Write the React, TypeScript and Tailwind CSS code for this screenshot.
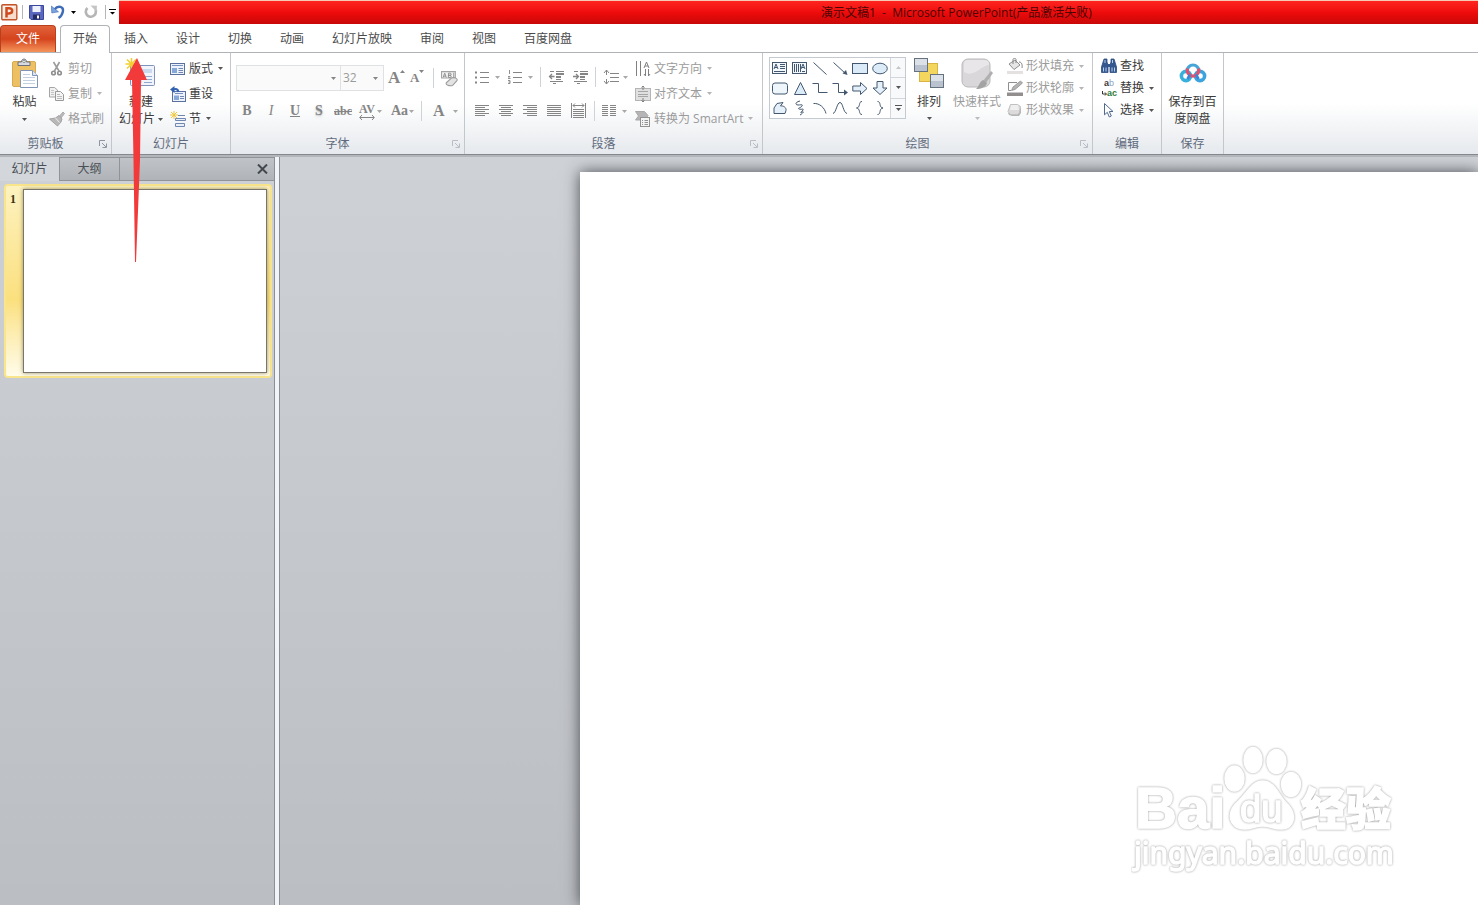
import { ReactNode } from 'react'
import clsx from 'clsx'

const tabs = ['插入', '设计', '切换', '动画', '幻灯片放映', '审阅', '视图', '百度网盘']

function Caret({ className }: { className?: string }) {
  return (
    <svg viewBox="0 0 5 3" className={clsx('h-[3px] w-[5px] shrink-0 fill-current', className)}>
      <path d="M0 0h5L2.5 3z" />
    </svg>
  )
}

function Icon({ children, className = 'size-4' }: { children: ReactNode; className?: string }) {
  return (
    <svg viewBox="0 0 16 16" className={clsx('shrink-0', className)} fill="none" stroke="currentColor">
      {children}
    </svg>
  )
}

function Separator() {
  return <span className="mx-[3px] h-5 w-px shrink-0 bg-[#cfd2d6]" />
}

interface GroupProps {
  label: string
  className: string
  launcher?: boolean
  dim?: boolean
  children: ReactNode
}

function Group({ label, className, launcher, dim, children }: GroupProps) {
  return (
    <section className={clsx('flex shrink-0 flex-col border-r border-[#c3c7cc]', className)}>
      <div className="flex h-[81px] items-start">{children}</div>
      <div className="flex h-5 items-center">
        <span className="flex-1 text-center text-[#5f6b7c]">{label}</span>
        {launcher && (
          <button aria-label={`${label}选项`} className={clsx('ml-1 w-4', dim ? 'text-[#b9bec6]' : 'text-[#8c95a1]')}>
            <svg viewBox="0 0 8 8" className="mx-auto size-2" fill="none" stroke="currentColor">
              <path d="M.5 6V.5H6M3 3l4 4M7.500 3.500v4h-4" />
            </svg>
          </button>
        )}
      </div>
    </section>
  )
}

interface RowButtonProps {
  icon: ReactNode
  label: string
  caret?: boolean
  disabled?: boolean
  className?: string
}

function RowButton({ icon, label, caret, disabled, className = 'h-[25px]' }: RowButtonProps) {
  return (
    <button
      disabled={disabled}
      className={clsx('flex items-center gap-[3px] whitespace-nowrap', disabled ? 'text-[#9b9b9b]' : 'text-[#3b3b3b]', className)}
    >
      {icon}
      <span>{label}</span>
      {caret && <Caret className={clsx('ml-0.5', disabled ? 'text-[#b5b5b5]' : 'text-[#555]')} />}
    </button>
  )
}

function ToolButton({ label, caret, children }: { label: string; caret?: boolean; children: ReactNode }) {
  return (
    <button disabled aria-label={label} className="flex h-6 items-center gap-1 px-1 text-[#858585]">
      {children}
      {caret && <Caret className="text-[#a8a8a8]" />}
    </button>
  )
}

function TitleBar() {
  return (
    <header className="flex h-6 bg-white">
      <div className="flex w-[119px] shrink-0 items-center">
        <svg viewBox="0 0 17 17" className="mx-px size-[17px]">
          <rect x=".8" y=".8" width="15" height="15" rx="1" fill="#f7dccb" stroke="#c4552a" strokeWidth="1.4" />
          <path d="M2 2h13L2 15z" fill="#fff" opacity=".6" />
          <path d="M5.500 13.500V4.200h2.500c4.200 0 4.200 5.200 0 5.200H6.500" fill="none" stroke="#cf4b1d" strokeWidth="2.500" />
        </svg>
        <span className="ml-[3px] h-3.5 w-px bg-[#b5b5b5]" />
        <button aria-label="保存" className="ml-1.5">
          <svg viewBox="0 0 15 15" className="size-[15px]">
            <path d="M.5.5h14v14H2l-1.500-1.500z" fill="#5a68c0" stroke="#3b479b" />
            <path d="M3.500 1h8v6h-8z" fill="#edf1fb" />
            <path d="M4 9.500h7v5H4z" fill="#252d62" />
            <path d="M8 10.500h2v3H8z" fill="#fff" />
          </svg>
        </button>
        <button aria-label="撤消" className="ml-[7px] flex items-center gap-1.5">
          <svg viewBox="0 0 14 14" className="size-3.5">
            <path d="M3.500 4.500C7-.2 13 1.500 11.800 6.700c-.5 2.800-2 4.800-4.300 6.300" fill="none" stroke="#3f6cb8" strokeWidth="2.400" />
            <path d="M.3 1l.5 7 6.700-1.200z" fill="#7ba3dd" stroke="#3f6cb8" strokeWidth=".6" />
          </svg>
          <Caret className="text-black" />
        </button>
        <button disabled aria-label="重复" className="ml-2">
          <svg viewBox="0 0 14 14" className="size-3.5">
            <path d="M3.500 3A5 5 0 1 0 11.800 6V4.500" fill="none" stroke="#b5b5b5" strokeWidth="2.600" />
            <path d="M6.500.5l6.500.3-.5 6z" fill="#c4c4c4" />
          </svg>
        </button>
        <span className="ml-[7px] h-3.5 w-px bg-[#b5b5b5]" />
        <button aria-label="自定义快速访问工具栏" className="ml-[3px]">
          <svg viewBox="0 0 7 6" className="h-1.5 w-[7px]">
            <path d="M0 0h7v1H0zM1 3h5L3.500 5.500z" />
          </svg>
        </button>
      </div>
      <div className="flex flex-1 items-center overflow-hidden border-t border-[#f6c9b4] bg-linear-to-b from-[#ff2420] via-[#ee0b0b] to-[#c80808] pl-[702px]">
        <h1 className="whitespace-pre text-xs text-[#4a0505]">演示文稿1  -  Microsoft PowerPoint(产品激活失败)</h1>
      </div>
    </header>
  )
}

function TabBar() {
  return (
    <nav className="flex h-[29px] items-stretch border-b border-[#b0b3b7] bg-white text-[#4a4a4a]">
      <button className="mt-px w-14 rounded-t-sm border border-b-0 border-[#b8401c] bg-linear-to-b from-[#e0623a] via-[#d5431c] to-[#f4935a] text-white">
        文件
      </button>
      <button className="-mb-px ml-1 mt-px w-[50px] rounded-t-sm border border-b-0 border-[#b0b3b7] bg-white pb-0.5">开始</button>
      {tabs.map((tab) => (
        <button key={tab} className="px-3.5 pt-px">
          {tab}
        </button>
      ))}
    </nav>
  )
}

function ClipboardGroup() {
  return (
    <Group label="剪贴板" className="w-[112px]" launcher>
      <button className="flex w-[49px] flex-col items-center pt-[5px] text-[#3b3b3b]">
        <svg viewBox="0 0 28 32" className="h-8 w-7">
          <rect x="1.500" y="3.500" width="23" height="25" rx="1.500" fill="#edc163" stroke="#d8a94f" />
          <path d="M7 7.500V4h3.500c0-4 5-4 5 0H19v3.500z" fill="#d7dbe1" stroke="#6c7179" />
          <circle cx="13" cy="3.500" r="1.200" fill="#fff" stroke="#6c7179" strokeWidth=".7" />
          <path d="M9.500 12.500h12l5 5v12h-17z" fill="#fff" stroke="#7f94b8" />
          <path d="M21.500 12.500v5h5" fill="#dbe5f3" stroke="#7f94b8" />
          <path d="M12 16.500h7M12 19.500h12M12 22.500h12M12 25.500h12" stroke="#c3d0e4" />
        </svg>
        <span className="mt-1 leading-4">粘贴</span>
        <Caret className="mt-2 text-[#555]" />
      </button>
      <div className="flex flex-col items-start pt-[3px]">
        <RowButton
          disabled
          label="剪切"
          icon={
            <Icon>
              <path d="M4.500 1l5.500 9M10.500 1L5.500 10" stroke="#9b9b9b" strokeWidth="1.600" />
              <circle cx="4.500" cy="12" r="1.800" stroke="#8e8e8e" strokeWidth="1.600" />
              <circle cx="10.500" cy="12" r="1.800" stroke="#8e8e8e" strokeWidth="1.600" />
            </Icon>
          }
        />
        <RowButton
          disabled
          caret
          label="复制"
          icon={
            <Icon>
              <path d="M.5 1.500h5l3 2.500v7h-8z" fill="#f1f1f1" stroke="#a5a5a5" />
              <path d="M2 4.500h3M2 6.500h3M2 8.500h3" stroke="#c4c4c4" />
              <path d="M6.500 5.500h5l3 3v6h-8z" fill="#f5f5f5" stroke="#999" />
              <path d="M8 8.500h3M8 10.500h5M8 12.500h5" stroke="#bbb" />
            </Icon>
          }
        />
        <RowButton
          disabled
          label="格式刷"
          icon={
            <Icon>
              <path d="M10.500 5L14 1l1.500 1.500L12 7z" fill="#bbb" stroke="#aaa" />
              <path d="M.5 8l6-1L10 4.500l3 3.500-1 3-3.500 4z" fill="#b8b8b8" stroke="#a3a3a3" />
              <path d="M6.500 7l4 4.500" stroke="#eee" />
            </Icon>
          }
        />
      </div>
    </Group>
  )
}

function SlidesGroup() {
  return (
    <Group label="幻灯片" className="w-[119px]">
      <button className="flex w-[58px] flex-col items-center pt-[5px] text-[#3b3b3b]">
        <svg viewBox="0 0 32 32" className="h-8 w-8">
          <rect x="5.500" y="7.500" width="24" height="20" rx="1" fill="#f1f5fb" stroke="#8093bb" />
          <path d="M8 11h19v4H8zM8 17h9v8H8z" fill="#cbd9ee" />
          <path d="M19 18.500h8M19 21.500h8M19 24.500h8" stroke="#91a8cf" />
          <path d="M6.500 0v12M.5 6h12M2 1.500l9 9M11 1.500l-9 9" stroke="#f3cf31" strokeWidth="1.600" />
        </svg>
        <span className="mt-1 leading-4">新建</span>
        <span className="flex items-center gap-[3px] leading-[18px]">
          幻灯片
          <Caret className="text-[#555]" />
        </span>
      </button>
      <div className="flex flex-col items-start pt-[3px]">
        <RowButton
          caret
          label="版式"
          icon={
            <Icon>
              <rect x=".5" y="2.500" width="14" height="11" fill="#eef3fb" stroke="#5a719f" />
              <path d="M2 4.500h11" stroke="#7690bf" />
              <path d="M2 7h5v5H2z" fill="#86a8d9" stroke="none" />
              <path d="M8.500 7.500H13M8.500 9.500H13M8.500 11.500H13" stroke="#7087b0" />
            </Icon>
          }
        />
        <RowButton
          label="重设"
          icon={
            <Icon>
              <rect x="2.500" y="5.500" width="13" height="10" fill="#eef3fb" stroke="#5a719f" />
              <path d="M5 7.500h8" stroke="#7690bf" />
              <path d="M4 9.500h5v4.500H4z" fill="#86a8d9" stroke="none" />
              <path d="M10 10.500h4M10 12.500h4" stroke="#7087b0" />
              <path d="M8.500 6C8 3 6 2.500 3 3.500" stroke="#2f62b0" strokeWidth="2" />
              <path d="M4.500 0v7L0 3.500z" fill="#2f62b0" stroke="none" />
            </Icon>
          }
        />
        <RowButton
          caret
          label="节"
          icon={
            <Icon>
              <path d="M4 0v8M0 4h8M1 1l6 6M7 1L1 7" stroke="#eec73b" />
              <path d="M8 4.500h7" stroke="#7087b0" />
              <path d="M5.500 7.500h10v2h-10zM5.500 12.500h9v3h-9z" fill="#e9f0fa" stroke="#7087b0" />
            </Icon>
          }
        />
      </div>
    </Group>
  )
}

function FontGroup() {
  const letter = 'h-6 w-6 text-center text-sm leading-6'
  return (
    <Group label="字体" className="w-[234px]" launcher dim>
      <div className="flex flex-col gap-2 pl-1 pt-3 text-[#858585]">
        <div className="flex h-[26px] items-center">
          <label className="ml-px flex h-[26px] w-[105px] items-center border border-[#dfe1e4] bg-[#fafafa] pr-1">
            <select disabled aria-label="字体" className="min-w-0 flex-1 appearance-none">
              <option></option>
            </select>
            <Caret />
          </label>
          <label className="-ml-px flex h-[26px] w-11 items-center border border-[#dfe1e4] bg-[#fafafa] pl-0.5 pr-[5px]">
            <select disabled aria-label="字号" className="min-w-0 flex-1 appearance-none text-xs text-[#9a9a9a]">
              <option>32</option>
            </select>
            <Caret />
          </label>
          <button disabled aria-label="增大字号" className="ml-1 flex h-6 w-[22px] items-start font-['Liberation_Serif',serif] text-[17px] font-bold leading-6">
            A
            <svg viewBox="0 0 5 3" className="mt-1 h-[3px] w-[5px] fill-current">
              <path d="M2.500 0L5 3H0z" />
            </svg>
          </button>
          <button disabled aria-label="减小字号" className="flex h-6 w-5 items-start font-['Liberation_Serif',serif] text-[13px] font-bold leading-6">
            A
            <Caret className="mt-1" />
          </button>
          <Separator />
          <button disabled aria-label="清除所有格式" className="ml-1">
            <Icon className="size-[17px]">
              <path d="M.5 1.500h13v6H.5z" fill="#f2f2f2" stroke="#a3a3a3" />
              <path d="M2 7l1.500-4L5 7M2.500 5.800h2M7 3v4h1.500c1.500 0 1.500-2 0-2H7h1.500c1.500 0 1.500-2 0-2zM12 2.500v5" stroke="#858585" strokeWidth=".8" />
              <path d="M5 12l5-4.500c3-1 6 .5 5 2.500l-4 4.500c-3 1-7-.5-6-2.500z" fill="#e3e3e3" stroke="#9b9b9b" />
            </Icon>
          </button>
        </div>
        <div className="flex h-6 items-center font-['Liberation_Serif',serif]">
          <button disabled aria-label="加粗" className={clsx(letter, 'font-bold')}>B</button>
          <button disabled aria-label="倾斜" className={clsx(letter, 'italic')}>I</button>
          <button disabled aria-label="下划线" className={clsx(letter, 'font-bold underline')}>U</button>
          <button disabled aria-label="文字阴影" className={clsx(letter, 'font-bold text-shadow-md')}>S</button>
          <button disabled aria-label="删除线" className="h-6 w-6 text-center text-xs font-bold leading-6 line-through">abc</button>
          <button disabled aria-label="字符间距" className="flex h-6 w-8 items-center gap-0.5 pl-1">
            <span className="flex flex-col items-center text-xs font-bold leading-3">
              AV
              <svg viewBox="0 0 16 5" className="h-[5px] w-4" fill="none" stroke="currentColor">
                <path d="M3 0L.7 2.500 3 5M13 0l2.300 2.500L13 5M1 2.500h14" />
              </svg>
            </span>
            <Caret className="text-[#a8a8a8]" />
          </button>
          <button disabled aria-label="更改大小写" className="flex h-6 w-[31px] items-center gap-px pl-1 text-sm font-bold">
            Aa
            <Caret className="text-[#a8a8a8]" />
          </button>
          <Separator />
          <button disabled aria-label="字体颜色" className="flex h-6 items-center gap-2 pl-2 text-base font-bold">
            A
            <Caret className="text-[#a8a8a8]" />
          </button>
        </div>
      </div>
    </Group>
  )
}

function ParagraphGroup() {
  return (
    <Group label="段落" className="w-[298px]" launcher dim>
      <div className="flex flex-col gap-2.5 pl-1.5 pt-3">
        <div className="flex h-6 items-center">
          <ToolButton label="项目符号" caret>
            <Icon>
              <path d="M0 3.500h2M0 8.500h2M0 13.500h2" strokeWidth="2" />
              <path d="M5 3.500h9M5 8.500h9M5 13.500h9" />
            </Icon>
          </ToolButton>
          <ToolButton label="编号" caret>
            <Icon>
              <path d="M1.500 1v4M0 7.500h2l-2 2h2.500M0 11.500h2v3H0M.5 13H2" strokeWidth=".9" />
              <path d="M5 3.500h9M5 8.500h9M5 13.500h9" />
            </Icon>
          </ToolButton>
          <Separator />
          <ToolButton label="减少缩进量">
            <Icon>
              <path d="M2 2.500h4M8 2.500h8M8 5.500h8M8 10.500h5M2 12.500h13M5 14.500h3" />
              <path d="M8 5h8M8 8h5" strokeWidth="2" />
              <path d="M6.500 7.500H2M4 5L1.500 7.500 4 10" strokeWidth="1.300" />
            </Icon>
          </ToolButton>
          <ToolButton label="增加缩进量">
            <Icon>
              <path d="M2 2.500h4M8 2.500h8M8 5.500h8M8 10.500h5M2 12.500h13M5 14.500h3" />
              <path d="M8 5h8M8 8h5" strokeWidth="2" />
              <path d="M1 7.500h5M4 5l2.500 2.500L4 10" strokeWidth="1.300" />
            </Icon>
          </ToolButton>
          <Separator />
          <ToolButton label="行距" caret>
            <Icon>
              <path d="M3.500 1v5M1 4l2.500-3L6 4M3.500 15v-5M1 12l2.500 3L6 12" />
              <path d="M7 4.500h9M7 8.500h9M7 12.500h9" />
            </Icon>
          </ToolButton>
        </div>
        <div className="flex h-6 items-center">
          <ToolButton label="文本左对齐">
            <Icon>
              <path d="M0 2.500h14M0 4.500h10M0 6.500h14M0 8.500h10M0 10.500h14M0 12.500h10" />
            </Icon>
          </ToolButton>
          <ToolButton label="居中">
            <Icon>
              <path d="M0 2.500h14M2 4.500h10M0 6.500h14M2 8.500h10M0 10.500h14M2 12.500h10" />
            </Icon>
          </ToolButton>
          <ToolButton label="文本右对齐">
            <Icon>
              <path d="M0 2.500h14M4 4.500h10M0 6.500h14M4 8.500h10M0 10.500h14M4 12.500h10" />
            </Icon>
          </ToolButton>
          <ToolButton label="两端对齐">
            <Icon>
              <path d="M0 2.500h14M0 4.500h14M0 6.500h14M0 8.500h14M0 10.500h14M0 12.500h14" />
            </Icon>
          </ToolButton>
          <ToolButton label="分散对齐">
            <Icon>
              <path d="M.5 0v15M14.500 0v15M2 2.500h11M4 .5l-2 2 2 2M11 .5l2 2-2 2M2 6.500h11M2 8.500h11M2 10.500h11M2 12.500h11M2 14.500h11" />
            </Icon>
          </ToolButton>
          <Separator />
          <ToolButton label="分栏" caret>
            <Icon>
              <path d="M0 2.500h6M0 4.500h6M0 6.500h6M0 8.500h6M0 10.500h6M0 12.500h6M8 2.500h6M8 4.500h6M8 6.500h6M8 8.500h6M8 10.500h6M8 12.500h6" />
            </Icon>
          </ToolButton>
        </div>
      </div>
      <div className="flex flex-col items-start pl-[3px] pt-[3px]">
        <RowButton
          disabled
          caret
          label="文字方向"
          icon={
            <Icon>
              <path d="M1.500 0v15M5.500 0v15M9 7l2.500-6L14 7M10 5h3M10.500 8v7M13.500 8v7M9 13l1.500 2M15 13l-1.500 2" stroke="#808080" />
            </Icon>
          }
        />
        <RowButton
          disabled
          caret
          label="对齐文本"
          icon={
            <Icon>
              <rect x=".5" y="2.500" width="15" height="12" fill="#e0e0e0" stroke="#b5b5b5" />
              <path d="M3 5.500h10M3 8.500h10M3 10.500h10" stroke="#a5a5a5" />
              <path d="M8 0v4M6.500 1.500L8 0l1.500 1.500M8 12v4M6.500 14.500L8 16l1.500-1.500" stroke="#808080" />
            </Icon>
          }
        />
        <RowButton
          disabled
          caret
          label="转换为 SmartArt"
          icon={
            <Icon>
              <path d="M.5.500h9L13 4.500 10 9H.5L3.500 5z" fill="#b5b5b5" stroke="#a8a8a8" />
              <rect x="5.500" y="6.500" width="9" height="9" fill="#f4f4f4" stroke="#929292" />
              <path d="M7 9.500h1M9.500 9.500H13M7 11.500h1M9.500 11.500H13M7 13.500h1M9.500 13.500H13" stroke="#929292" />
            </Icon>
          }
        />
      </div>
    </Group>
  )
}

// Shape gallery, three rows of six
const shapes: { name: string; art: ReactNode }[] = [
  { name: '文本框', art: <><rect x=".5" y="2.500" width="14" height="11" fill="#f3f8fd" /><path d="M2 9l2-5 2 5M3 7.500h2M8 4.500h5M8 6.500h5M8 8.500h5M2 11.500h11" /></> },
  { name: '垂直文本框', art: <><rect x=".5" y="2.500" width="14" height="11" fill="#f3f8fd" /><path d="M2.500 4v8M4.500 4v8M6.500 4v8M9 9l2-5 2 5M10 7.500h2M8.500 4v8M13 11.500H10" /></> },
  { name: '直线', art: <path d="M1.500 2.500l13 12" /> },
  { name: '箭头', art: <><path d="M1.500 2.500l12 11" /><path d="M15.500 15l-5-1.500 3.500-3.500z" fill="currentColor" stroke="none" /></> },
  { name: '矩形', art: <rect x=".5" y="3.500" width="15" height="10" fill="#dcebf8" /> },
  { name: '椭圆', art: <ellipse cx="8" cy="8.500" rx="7.300" ry="5.300" fill="#dcebf8" /> },
  { name: '圆角矩形', art: <rect x=".5" y="3" width="15" height="11" rx="2.500" fill="#eef5fb" /> },
  { name: '三角形', art: <path d="M8.500 2.500l6 12h-12z" fill="#dcebf8" /> },
  { name: '肘形连接符', art: <path d="M.5 3.500h6v9h9" /> },
  { name: '肘形箭头', art: <><path d="M.5 3.500h6v9h7" /><path d="M12 9.500l4 3-4 3z" fill="currentColor" stroke="none" /></> },
  { name: '右箭头', art: <path d="M.8 6h7.700V2.500L15 8.500l-6.500 6V11H.8z" fill="#e5f0fa" /> },
  { name: '下箭头', art: <path d="M5 1.500h6V8h4l-7 6.500L1 8h4z" fill="#e5f0fa" /> },
  { name: '任意多边形', art: <path d="M2 13.500V8l3-4.500L11 2.500 8.500 6c3-.5 6 1.500 5.500 4.500l-1 3z" fill="#e5f0fa" /> },
  { name: '自由曲线', art: <path d="M8 1c-5 1-5 4-2 4s5-1 4 1-5 2-3 3 5-1 4 1-4 3-1 2 0 2-2 3" /> },
  { name: '弧形', art: <path d="M1.500 3.500c6-.5 11 4 12.500 10" /> },
  { name: '曲线', art: <path d="M1 13.500C4 13 5 2.500 8 2.500s3 10 7 11" /> },
  { name: '左大括号', art: <path d="M10 1.500C6 1.500 9 7.500 4.500 8c4.500.5 1.500 6.500 5.500 6.500" /> },
  { name: '右大括号', art: <path d="M5.500 1.500c4 0 1 6 5.500 6.500-4.500.5-1.500 6.500-5.500 6.500" /> },
]

function DrawingGroup() {
  return (
    <Group label="绘图" className="w-[330px]" launcher dim>
      <div className="ml-1.5 mt-1 flex border border-[#c5cad0] bg-white">
        <div className="grid grid-cols-6">
          {shapes.map((shape) => (
            <button key={shape.name} aria-label={shape.name} className="flex size-5 items-center justify-center text-[#43586f]">
              <Icon>{shape.art}</Icon>
            </button>
          ))}
        </div>
        <div className="flex w-[15px] flex-col border-l border-[#d3d6da] bg-[#f8f9fa] text-[#555]">
          <button disabled aria-label="上一行" className="flex flex-1 items-center justify-center text-[#c5c5c5]">
            <Caret className="rotate-180" />
          </button>
          <button aria-label="下一行" className="flex flex-1 items-center justify-center border-y border-[#d3d6da]">
            <Caret />
          </button>
          <button aria-label="其他" className="flex flex-1 flex-col items-center justify-center gap-0.5">
            <span className="h-px w-[7px] bg-current" />
            <Caret />
          </button>
        </div>
      </div>
      <button className="ml-[5px] flex w-9 flex-col items-center pt-[5px] text-[#3b3b3b]">
        <svg viewBox="0 0 31 32" className="h-8 w-[31px]">
          <rect x="5.500" y="5.500" width="18" height="18" fill="#f4d65e" stroke="#d9b344" />
          <rect x=".5" y=".5" width="13" height="13" fill="#b9c2ce" stroke="#66717e" />
          <path d="M1 1h12v6H1z" fill="#dce1e8" />
          <rect x="16.500" y="16.500" width="13" height="13" fill="#b9c2ce" stroke="#66717e" />
          <path d="M17 17h12v6H17z" fill="#dce1e8" />
        </svg>
        <span className="mt-1 leading-4">排列</span>
        <Caret className="mt-[7px] text-[#555]" />
      </button>
      <button disabled className="ml-1 flex w-[52px] flex-col items-center whitespace-nowrap pt-[5px] text-[#9b9b9b]">
        <svg viewBox="0 0 32 32" className="size-8">
          <rect x="1" y="1" width="28" height="28" rx="6" fill="#d9d7d9" stroke="#bab8ba" />
          <path d="M3 14C12 20 20 8 28 7v-1c0-3-2-4-4-4H7C4 2 3 4 3 6z" fill="#e8e6e8" />
          <path d="M30 13l2 2-7 10-3-2z" fill="#b0b0b0" />
          <path d="M22 22l4 3c-1 4-6 6-11 6 3-2 3-7 7-9z" fill="#a3a3a3" />
        </svg>
        <span className="mt-1 leading-4">快速样式</span>
        <Caret className="mt-[7px] text-[#bbb]" />
      </button>
      <div className="ml-1 flex flex-col items-start pt-0.5">
        <RowButton
          disabled
          caret
          label="形状填充"
          className="h-[22px]"
          icon={
            <Icon>
              <path d="M2 6l6-4 5 5-6 4.500z" fill="#e6e6e6" stroke="#8f8f8f" />
              <path d="M6 6V1.500c0-1.500 3-1.500 3 0V5M12 4c3 0 3.500 3 3 6" stroke="#858585" />
              <path d="M0 13h16v3H0z" fill="#e5e1e1" stroke="none" />
            </Icon>
          }
        />
        <RowButton
          disabled
          caret
          label="形状轮廓"
          className="h-[22px]"
          icon={
            <Icon>
              <path d="M10 2.500H1.500v8H4" stroke="#8f8f8f" />
              <path d="M4.500 10.500L6 7l7.500-6 2 2L8 9.500z" fill="#b5b5b5" stroke="#858585" strokeWidth=".7" />
              <path d="M0 12.500h16V16H0z" fill="#928e8e" stroke="none" />
            </Icon>
          }
        />
        <RowButton
          disabled
          caret
          label="形状效果"
          className="h-[22px]"
          icon={
            <Icon>
              <path d="M1 11l1 2 3 1h7l2-3V6z" fill="#b5b5b5" stroke="none" />
              <path d="M3.500 2.500h7l3 2-1 6-2 2h-7l-2.500-3z" fill="#dcdada" stroke="#c0c0c0" />
              <path d="M4 3h7l1 5H3z" fill="#f0efef" stroke="none" />
            </Icon>
          }
        />
      </div>
    </Group>
  )
}

function EditGroup() {
  return (
    <Group label="编辑" className="w-[69px]">
      <div className="ml-2 flex flex-col items-start pt-0.5">
        <RowButton
          label="查找"
          className="h-[22px]"
          icon={
            <Icon>
              <path d="M3 1h3v3l1 3v7.500H.5V9zM10 1h3l2.500 8v5.500H9V7l1-3z" fill="#35598f" stroke="#2c4d82" strokeWidth=".8" />
              <path d="M6.500 6h3v3h-3z" fill="#35598f" stroke="none" />
              <path d="M2.500 9.500v4M5 9.500v4M11 9.500v4M13.500 9.500v4M4 2v3M11.500 2v3" stroke="#b9cfee" />
            </Icon>
          }
        />
        <RowButton
          caret
          label="替换"
          className="h-[22px]"
          icon={
            <span className="flex w-4 flex-col font-['Liberation_Sans',sans-serif] text-[9px] font-bold leading-[10px]">
              <span>
                a<span className="font-normal text-[#8ea1bd]">b</span>
              </span>
              <span className="flex items-center justify-end text-[#2f7d3c]">
                <svg viewBox="0 0 5 5" className="size-[5px] shrink-0" fill="none" stroke="#333">
                  <path d="M.5 0v3H4M3 1.500L4.500 3 3 4.500" />
                </svg>
                ac
              </span>
            </span>
          }
        />
        <RowButton
          caret
          label="选择"
          className="h-[22px]"
          icon={
            <Icon>
              <path d="M3.500 1.500v11.300l2.800-2.500 2 4.700 2-1-2-4.500h3.700z" fill="#fff" stroke="#51698f" />
            </Icon>
          }
        />
      </div>
    </Group>
  )
}

function SaveGroup() {
  return (
    <Group label="保存" className="w-[62px]">
      <button className="flex w-full flex-col items-center pt-2 text-[#3b3b3b]">
        <svg viewBox="0 0 28 24" className="h-6 w-7" fill="none">
          <circle cx="7" cy="15" r="4.600" stroke="#38b0dc" strokeWidth="3.600" />
          <circle cx="21" cy="15" r="4.600" stroke="#3ba3dd" strokeWidth="3.600" />
          <path d="M8 10a6 6 0 0 1 12 0" stroke="#48a5d8" strokeWidth="3.200" />
          <path d="M8.300 7.500c-.8 4 2 7.700 5.700 7.700s6.500-3.700 5.700-7.700" stroke="#e4506b" strokeWidth="3.200" />
          <path d="M11 13.500l-2.500 4.500M17 13.500l2.500 4.500" stroke="#3a86d6" strokeWidth="2.600" />
        </svg>
        <span className="mt-2 w-12 text-center leading-[17px]">保存到百度网盘</span>
      </button>
    </Group>
  )
}

function SlidePanel() {
  return (
    <aside className="flex w-[275px] shrink-0 flex-col border-r border-[#8b9095]">
      <div className="flex h-6 items-stretch text-[#4a4f57]">
        <button className="w-[59px] bg-[#d3d6da]">幻灯片</button>
        <div className="flex flex-1 items-stretch border-y border-l border-[#8f949a] bg-linear-to-b from-[#c0c4c8] to-[#b0b4b9]">
          <button className="w-[60px] border-r border-[#8f949a]">大纲</button>
          <button aria-label="关闭" className="ml-auto w-6">
            <svg viewBox="0 0 11 10" className="mx-auto h-2.5 w-[11px]" fill="none" stroke="#43484f" strokeWidth="2">
              <path d="M1 .5l9 9M10 .5l-9 9" />
            </svg>
          </button>
        </div>
      </div>
      <ol className="pt-[3px] pr-0.5 pl-1">
        <li className="flex rounded-sm border-2 border-[#f9e68c] bg-linear-to-b from-[#fdf2bf] via-[#fbe07e] via-60% to-[#fffce9] py-[3px] pr-[3px]">
          <span className="w-[17px] pt-1 pl-1 font-['Liberation_Serif',serif] text-xs font-bold leading-3 text-[#3b3413]">1</span>
          <button aria-label="幻灯片 1" className="aspect-[244/184] flex-1 border border-[#77756c] bg-white shadow-[0_0_4px_rgba(90,80,30,0.6)]" />
        </li>
      </ol>
    </aside>
  )
}

// White artwork, visible only through its soft grey edge
function Watermark() {
  const edge = 'drop-shadow-[0_0_1px_#9a9a9a]'
  return (
    <svg
      viewBox="0 0 270 130"
      className="absolute right-[77px] bottom-[30px] h-[130px] w-[270px]"
      fill="#fff"
      stroke="#fff"
      strokeWidth="1.500"
      strokeLinejoin="round"
    >
      <text className={edge} x="4" y="83" fontFamily="Liberation Sans, sans-serif" fontWeight="700" fontSize="58">Bai</text>
      <ellipse className={edge} cx="103.500" cy="33.500" rx="9.500" ry="12.500" />
      <ellipse className={edge} cx="122" cy="15" rx="9" ry="12.500" />
      <ellipse className={edge} cx="145.500" cy="16.500" rx="9.500" ry="12" />
      <ellipse className={edge} cx="160" cy="39.500" rx="9.500" ry="12" />
      <path className={edge} d="M131.500 36c12 0 16 14 23 21 13 12 9 28-5 27-7 0-11-3-18-3s-11 3-18 3c-16 0-19-17-6-28 8-7 13-20 24-20z" />
      <text className={edge} x="109" y="77" fontFamily="Liberation Sans, sans-serif" fontSize="38">du</text>
      <text className={edge} x="170" y="81" fontFamily="Noto Sans CJK SC, sans-serif" fontWeight="900" fontSize="45">经验</text>
      <text className={edge} x="3" y="119" fontFamily="Noto Sans, sans-serif" fontSize="30">jingyan.baidu.com</text>
    </svg>
  )
}

export default function App() {
  return (
    <div className="relative flex h-screen flex-col overflow-hidden bg-white font-['Open_Sans','Noto_Sans_CJK_SC',sans-serif] text-xs leading-4">
      <TitleBar />
      <TabBar />
      <div className="flex h-[102px] shrink-0 border-b border-[#85898f] bg-linear-to-b from-white from-50% to-[#e6e9ed]">
        <ClipboardGroup />
        <SlidesGroup />
        <FontGroup />
        <ParagraphGroup />
        <DrawingGroup />
        <EditGroup />
        <SaveGroup />
      </div>
      <div className="flex min-h-0 flex-1 border-t-2 border-[#b3b6bb] bg-linear-to-b from-[#ced1d5] to-[#bbbec2]">
        <SlidePanel />
        <div className="w-[5px] shrink-0 border-r border-[#8b9095] bg-[#f1f5f8]" />
        <main className="flex flex-1 overflow-hidden pt-[15px] pl-[300px]">
          <div className="relative flex-1 bg-white shadow-[0_0_14px_rgba(40,44,50,0.8)]">
            <Watermark />
          </div>
        </main>
      </div>
      <svg viewBox="0 0 22 204" className="pointer-events-none absolute top-[58px] left-[125px] h-[204px] w-[22px] fill-[#f23a3a]">
        <path d="M12 0l10 22h-6l-1 80L11 204h-1L8.500 102 7 22H0z" />
      </svg>
    </div>
  )
}
